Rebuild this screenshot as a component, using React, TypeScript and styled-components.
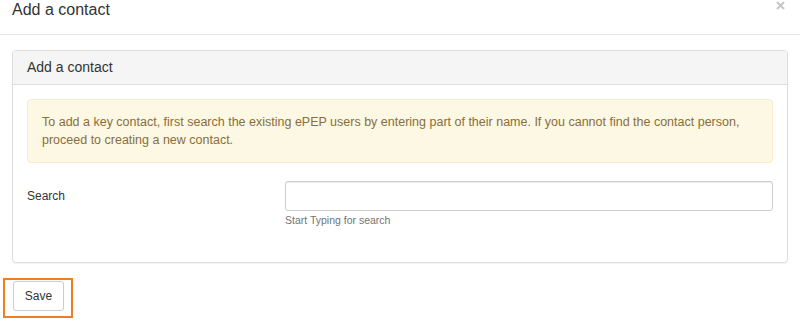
import React from 'react'
import styled, { createGlobalStyle } from 'styled-components'

const GlobalStyle = createGlobalStyle`
  html, body {
    margin: 0;
    padding: 0;
    background: #fff;
    overflow: hidden;
  }
  body {
    font-family: "Liberation Sans", Arial, sans-serif;
    color: #333;
  }
  * {
    box-sizing: border-box;
  }
`;

const Modal = styled.div`
  width: 800px;
  height: 326px;
  background: #fff;
`;

const ModalHeader = styled.div`
  display: flex;
  justify-content: space-between;
  align-items: flex-start;
  height: 35px;
  padding: 0 15px 0 12px;
  border-bottom: 1px solid #e5e5e5;
`;

const ModalTitle = styled.h4`
  margin: 0;
  font-size: 16px;
  font-weight: 400;
  line-height: 20px;
  color: #333;
`;

const CloseButton = styled.button`
  display: flex;
  border: 0;
  background: transparent;
  padding: 0;
  margin-top: 1px;
  color: #000;
  opacity: 0.22;
  cursor: pointer;
`;

const ModalBody = styled.div`
  padding: 15px 12px 0 12px;
`;

const Panel = styled.div`
  border: 1px solid #ddd;
  border-radius: 4px;
  box-shadow: 0 1px 1px rgba(0, 0, 0, 0.05);
`;

const PanelHeading = styled.div`
  height: 34px;
  padding: 0 14px;
  background: #f5f5f5;
  border-bottom: 1px solid #ddd;
  border-radius: 3px 3px 0 0;
  font-size: 14px;
  line-height: 33px;
  color: #333;
`;

const PanelBody = styled.div`
  padding: 14px 14px 35px 14px;
`;

const Alert = styled.div`
  padding: 13px 14px;
  border: 1px solid #faebcc;
  border-radius: 4px;
  background: #fcf8e3;
  color: #8a6d3b;
  font-size: 12.5px;
  line-height: 18px;
`;

const FormRow = styled.div`
  display: grid;
  grid-template-columns: 258px 1fr;
  margin-top: 18px;
`;

const Label = styled.label`
  font-size: 12px;
  line-height: 30px;
  color: #333;
`;

const Field = styled.div`
  display: flex;
  flex-direction: column;
`;

const Input = styled.input`
  height: 30px;
  padding: 4px 10px;
  border: 1px solid #ccc;
  border-radius: 3px;
  box-shadow: inset 0 1px 1px rgba(0, 0, 0, 0.075);
  font-family: inherit;
  font-size: 12px;
  outline: none;
`;

const HelpText = styled.span`
  margin-top: 2px;
  font-size: 10.5px;
  line-height: 14px;
  color: #737373;
`;

const Footer = styled.div`
  padding: 15px 0 0 3px;
`;

const Highlight = styled.div`
  display: inline-block;
  padding: 1px 7px 5px 8px;
  border: 2px solid #ef7d22;
`;

const Button = styled.button`
  width: 51px;
  height: 30px;
  padding: 0;
  border: 1px solid #ccc;
  border-radius: 3px;
  background: #fff;
  font-family: "Liberation Sans", Arial, sans-serif;
  font-size: 12px;
  color: #333;
  cursor: pointer;
`;

const App = () => {
    return (
        <>
            <GlobalStyle />
            <Modal>
                <ModalHeader>
                    <ModalTitle>Add a contact</ModalTitle>
                    <CloseButton aria-label="Close">
                        <svg width="9" height="9" viewBox="0 0 9 9">
                            <path d="M1 1L8 8M8 1L1 8" stroke="currentColor" strokeWidth="2" />
                        </svg>
                    </CloseButton>
                </ModalHeader>

                <ModalBody>
                    <Panel>
                        <PanelHeading>Add a contact</PanelHeading>
                        <PanelBody>
                            <Alert>
                                To add a key contact, first search the existing ePEP users by entering part of their name. If you cannot find the contact person, proceed to creating a new contact.
                            </Alert>

                            <FormRow>
                                <Label htmlFor="search">Search</Label>
                                <Field>
                                    <Input id="search" type="text" />
                                    <HelpText>Start Typing for search</HelpText>
                                </Field>
                            </FormRow>
                        </PanelBody>
                    </Panel>
                </ModalBody>

                <Footer>
                    <Highlight>
                        <Button>Save</Button>
                    </Highlight>
                </Footer>
            </Modal>
        </>
    )
}

export default App
